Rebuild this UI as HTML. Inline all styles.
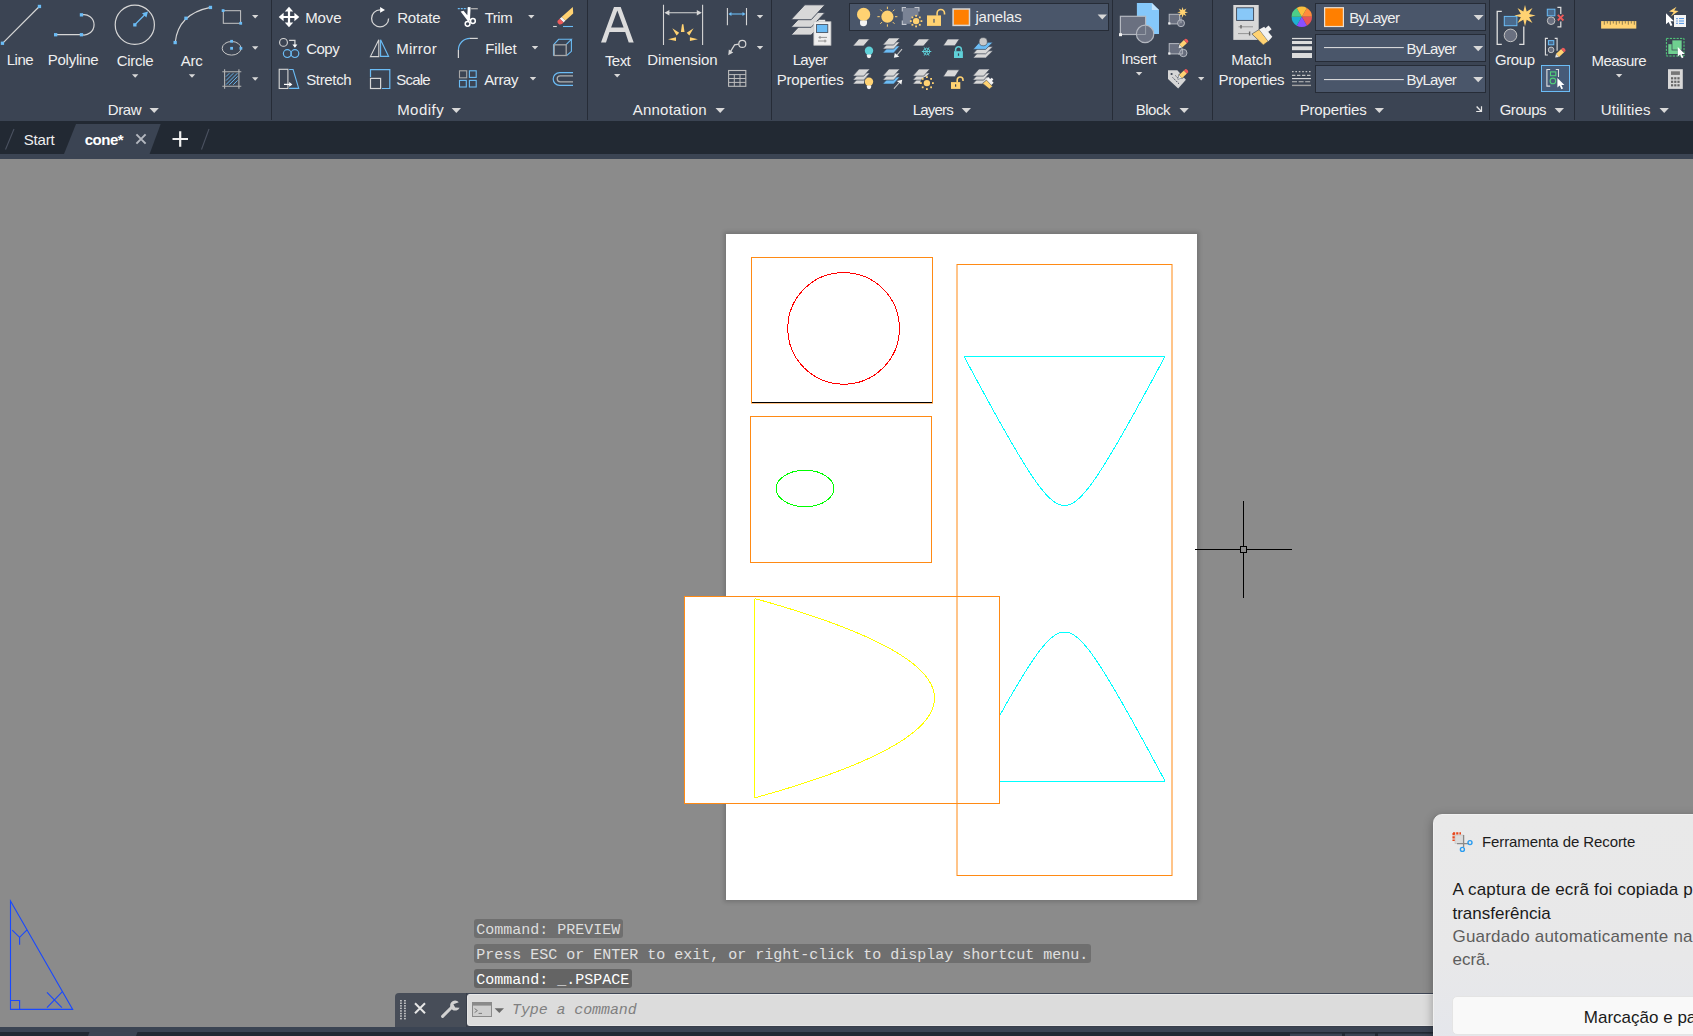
<!DOCTYPE html><html><head><meta charset="utf-8"><title>AutoCAD</title><style>
*{box-sizing:border-box;margin:0;padding:0}
html,body{width:1693px;height:1036px;overflow:hidden;background:#8b8b8b;font-family:"Liberation Sans",sans-serif}
#root{position:relative;width:1693px;height:1036px;overflow:hidden;background:#8b8b8b}
.abs{position:absolute}
#ribbon{left:0;top:0;width:1693px;height:121px;background:#3b4453}
.sep{position:absolute;top:0;width:1px;height:120px;background:#262c37}
#tabbar{left:0;top:121px;width:1693px;height:33px;background:#222933}
#understrip{left:0;top:154px;width:1693px;height:5px;background:#3b4453}
.lbl{position:absolute;white-space:nowrap}
svg{position:absolute;overflow:visible}
.combo{position:absolute;background:#4a566a;border:1px solid #262c37}
.hist{position:absolute;left:474px;height:19px;border-radius:3px;font-family:"Liberation Mono",monospace;font-size:15px;line-height:19px;padding-left:2.2px;white-space:nowrap;overflow:hidden}
</style></head><body><div id="root">
<div class="abs" style="left:726px;top:234px;width:471px;height:666px;background:#fff;box-shadow:0 0 4px 2px rgba(0,0,0,0.17)"></div>
<svg class="abs" style="left:0;top:0" width="1693" height="1036" viewBox="0 0 1693 1036" fill="none">
<g stroke="#00ffff" stroke-width="1" shape-rendering="crispEdges">
<polyline points="964.0,356.41 965.0,358.28 966.0,360.14 967.0,362.01 968.0,363.87 969.0,365.73 970.0,367.59 971.0,369.45 972.0,371.30 973.0,373.16 974.0,375.01 975.0,376.86 976.0,378.71 977.0,380.56 978.0,382.41 979.0,384.25 980.0,386.10 981.0,387.94 982.0,389.78 983.0,391.61 984.0,393.45 985.0,395.28 986.0,397.11 987.0,398.93 988.0,400.76 989.0,402.58 990.0,404.40 991.0,406.22 992.0,408.03 993.0,409.84 994.0,411.65 995.0,413.45 996.0,415.25 997.0,417.05 998.0,418.84 999.0,420.63 1000.0,422.42 1001.0,424.20 1002.0,425.97 1003.0,427.75 1004.0,429.51 1005.0,431.28 1006.0,433.03 1007.0,434.79 1008.0,436.53 1009.0,438.28 1010.0,440.01 1011.0,441.74 1012.0,443.46 1013.0,445.18 1014.0,446.89 1015.0,448.59 1016.0,450.28 1017.0,451.97 1018.0,453.64 1019.0,455.31 1020.0,456.97 1021.0,458.62 1022.0,460.25 1023.0,461.88 1024.0,463.50 1025.0,465.10 1026.0,466.69 1027.0,468.26 1028.0,469.82 1029.0,471.37 1030.0,472.90 1031.0,474.42 1032.0,475.91 1033.0,477.39 1034.0,478.85 1035.0,480.28 1036.0,481.70 1037.0,483.09 1038.0,484.46 1039.0,485.80 1040.0,487.11 1041.0,488.40 1042.0,489.65 1043.0,490.87 1044.0,492.06 1045.0,493.21 1046.0,494.32 1047.0,495.39 1048.0,496.42 1049.0,497.41 1050.0,498.35 1051.0,499.24 1052.0,500.08 1053.0,500.86 1054.0,501.59 1055.0,502.26 1056.0,502.87 1057.0,503.42 1058.0,503.91 1059.0,504.33 1060.0,504.68 1061.0,504.96 1062.0,505.18 1063.0,505.32 1064.0,505.39 1065.0,505.39 1066.0,505.32 1067.0,505.18 1068.0,504.96 1069.0,504.68 1070.0,504.33 1071.0,503.91 1072.0,503.42 1073.0,502.87 1074.0,502.26 1075.0,501.59 1076.0,500.86 1077.0,500.08 1078.0,499.24 1079.0,498.35 1080.0,497.41 1081.0,496.42 1082.0,495.39 1083.0,494.32 1084.0,493.21 1085.0,492.06 1086.0,490.87 1087.0,489.65 1088.0,488.40 1089.0,487.11 1090.0,485.80 1091.0,484.46 1092.0,483.09 1093.0,481.70 1094.0,480.28 1095.0,478.85 1096.0,477.39 1097.0,475.91 1098.0,474.42 1099.0,472.90 1100.0,471.37 1101.0,469.82 1102.0,468.26 1103.0,466.69 1104.0,465.10 1105.0,463.50 1106.0,461.88 1107.0,460.25 1108.0,458.62 1109.0,456.97 1110.0,455.31 1111.0,453.64 1112.0,451.97 1113.0,450.28 1114.0,448.59 1115.0,446.89 1116.0,445.18 1117.0,443.46 1118.0,441.74 1119.0,440.01 1120.0,438.28 1121.0,436.53 1122.0,434.79 1123.0,433.03 1124.0,431.28 1125.0,429.51 1126.0,427.75 1127.0,425.97 1128.0,424.20 1129.0,422.42 1130.0,420.63 1131.0,418.84 1132.0,417.05 1133.0,415.25 1134.0,413.45 1135.0,411.65 1136.0,409.84 1137.0,408.03 1138.0,406.22 1139.0,404.40 1140.0,402.58 1141.0,400.76 1142.0,398.93 1143.0,397.11 1144.0,395.28 1145.0,393.45 1146.0,391.61 1147.0,389.78 1148.0,387.94 1149.0,386.10 1150.0,384.25 1151.0,382.41 1152.0,380.56 1153.0,378.71 1154.0,376.86 1155.0,375.01 1156.0,373.16 1157.0,371.30 1158.0,369.45 1159.0,367.59 1160.0,365.73 1161.0,363.87 1162.0,362.01 1163.0,360.14 1164.0,358.28 1165.0,356.41"/>
<line x1="964" y1="356.5" x2="1165" y2="356.5"/>
<polyline points="964.0,780.99 965.0,779.12 966.0,777.26 967.0,775.39 968.0,773.53 969.0,771.67 970.0,769.81 971.0,767.95 972.0,766.10 973.0,764.24 974.0,762.39 975.0,760.54 976.0,758.69 977.0,756.84 978.0,754.99 979.0,753.15 980.0,751.30 981.0,749.46 982.0,747.62 983.0,745.79 984.0,743.95 985.0,742.12 986.0,740.29 987.0,738.47 988.0,736.64 989.0,734.82 990.0,733.00 991.0,731.18 992.0,729.37 993.0,727.56 994.0,725.75 995.0,723.95 996.0,722.15 997.0,720.35 998.0,718.56 999.0,716.77 1000.0,714.98 1001.0,713.20 1002.0,711.43 1003.0,709.65 1004.0,707.89 1005.0,706.12 1006.0,704.37 1007.0,702.61 1008.0,700.87 1009.0,699.12 1010.0,697.39 1011.0,695.66 1012.0,693.94 1013.0,692.22 1014.0,690.51 1015.0,688.81 1016.0,687.12 1017.0,685.43 1018.0,683.76 1019.0,682.09 1020.0,680.43 1021.0,678.78 1022.0,677.15 1023.0,675.52 1024.0,673.90 1025.0,672.30 1026.0,670.71 1027.0,669.14 1028.0,667.58 1029.0,666.03 1030.0,664.50 1031.0,662.98 1032.0,661.49 1033.0,660.01 1034.0,658.55 1035.0,657.12 1036.0,655.70 1037.0,654.31 1038.0,652.94 1039.0,651.60 1040.0,650.29 1041.0,649.00 1042.0,647.75 1043.0,646.53 1044.0,645.34 1045.0,644.19 1046.0,643.08 1047.0,642.01 1048.0,640.98 1049.0,639.99 1050.0,639.05 1051.0,638.16 1052.0,637.32 1053.0,636.54 1054.0,635.81 1055.0,635.14 1056.0,634.53 1057.0,633.98 1058.0,633.49 1059.0,633.07 1060.0,632.72 1061.0,632.44 1062.0,632.22 1063.0,632.08 1064.0,632.01 1065.0,632.01 1066.0,632.08 1067.0,632.22 1068.0,632.44 1069.0,632.72 1070.0,633.07 1071.0,633.49 1072.0,633.98 1073.0,634.53 1074.0,635.14 1075.0,635.81 1076.0,636.54 1077.0,637.32 1078.0,638.16 1079.0,639.05 1080.0,639.99 1081.0,640.98 1082.0,642.01 1083.0,643.08 1084.0,644.19 1085.0,645.34 1086.0,646.53 1087.0,647.75 1088.0,649.00 1089.0,650.29 1090.0,651.60 1091.0,652.94 1092.0,654.31 1093.0,655.70 1094.0,657.12 1095.0,658.55 1096.0,660.01 1097.0,661.49 1098.0,662.98 1099.0,664.50 1100.0,666.03 1101.0,667.58 1102.0,669.14 1103.0,670.71 1104.0,672.30 1105.0,673.90 1106.0,675.52 1107.0,677.15 1108.0,678.78 1109.0,680.43 1110.0,682.09 1111.0,683.76 1112.0,685.43 1113.0,687.12 1114.0,688.81 1115.0,690.51 1116.0,692.22 1117.0,693.94 1118.0,695.66 1119.0,697.39 1120.0,699.12 1121.0,700.87 1122.0,702.61 1123.0,704.37 1124.0,706.12 1125.0,707.89 1126.0,709.65 1127.0,711.43 1128.0,713.20 1129.0,714.98 1130.0,716.77 1131.0,718.56 1132.0,720.35 1133.0,722.15 1134.0,723.95 1135.0,725.75 1136.0,727.56 1137.0,729.37 1138.0,731.18 1139.0,733.00 1140.0,734.82 1141.0,736.64 1142.0,738.47 1143.0,740.29 1144.0,742.12 1145.0,743.95 1146.0,745.79 1147.0,747.62 1148.0,749.46 1149.0,751.30 1150.0,753.15 1151.0,754.99 1152.0,756.84 1153.0,758.69 1154.0,760.54 1155.0,762.39 1156.0,764.24 1157.0,766.10 1158.0,767.95 1159.0,769.81 1160.0,771.67 1161.0,773.53 1162.0,775.39 1163.0,777.26 1164.0,779.12 1165.0,780.99"/>
<line x1="964" y1="781.5" x2="1165" y2="781.5"/>
</g>
<rect x="684.5" y="596.5" width="315" height="207" fill="#fff" stroke="#ff8a14"/>
<g stroke="#ffff00" stroke-width="1" shape-rendering="crispEdges"><polyline points="754.5,598.5 754.58,598.5 758.18,599.5 761.73,600.5 765.25,601.5 768.73,602.5 772.18,603.5 775.59,604.5 778.96,605.5 782.30,606.5 785.60,607.5 788.87,608.5 792.09,609.5 795.29,610.5 798.44,611.5 801.56,612.5 804.65,613.5 807.70,614.5 810.71,615.5 813.68,616.5 816.62,617.5 819.53,618.5 822.39,619.5 825.23,620.5 828.02,621.5 830.78,622.5 833.50,623.5 836.19,624.5 838.84,625.5 841.45,626.5 844.03,627.5 846.57,628.5 849.07,629.5 851.54,630.5 853.98,631.5 856.37,632.5 858.73,633.5 861.06,634.5 863.34,635.5 865.60,636.5 867.81,637.5 869.99,638.5 872.13,639.5 874.24,640.5 876.31,641.5 878.34,642.5 880.34,643.5 882.31,644.5 884.23,645.5 886.12,646.5 887.97,647.5 889.79,648.5 891.57,649.5 893.32,650.5 895.03,651.5 896.70,652.5 898.33,653.5 899.93,654.5 901.50,655.5 903.03,656.5 904.52,657.5 905.97,658.5 907.39,659.5 908.77,660.5 910.12,661.5 911.43,662.5 912.71,663.5 913.94,664.5 915.15,665.5 916.31,666.5 917.44,667.5 918.53,668.5 919.59,669.5 920.61,670.5 921.60,671.5 922.55,672.5 923.46,673.5 924.33,674.5 925.17,675.5 925.98,676.5 926.74,677.5 927.48,678.5 928.17,679.5 928.83,680.5 929.45,681.5 930.04,682.5 930.59,683.5 931.10,684.5 931.58,685.5 932.02,686.5 932.43,687.5 932.80,688.5 933.13,689.5 933.43,690.5 933.69,691.5 933.91,692.5 934.10,693.5 934.25,694.5 934.37,695.5 934.45,696.5 934.49,697.5 934.50,698.5 934.47,699.5 934.40,700.5 934.30,701.5 934.17,702.5 933.99,703.5 933.78,704.5 933.54,705.5 933.25,706.5 932.93,707.5 932.58,708.5 932.19,709.5 931.76,710.5 931.30,711.5 930.80,712.5 930.26,713.5 929.69,714.5 929.08,715.5 928.44,716.5 927.76,717.5 927.04,718.5 926.29,719.5 925.50,720.5 924.67,721.5 923.81,722.5 922.91,723.5 921.98,724.5 921.01,725.5 920.00,726.5 918.96,727.5 917.88,728.5 916.77,729.5 915.62,730.5 914.43,731.5 913.21,732.5 911.95,733.5 910.65,734.5 909.32,735.5 907.95,736.5 906.54,737.5 905.10,738.5 903.63,739.5 902.11,740.5 900.56,741.5 898.98,742.5 897.36,743.5 895.70,744.5 894.01,745.5 892.27,746.5 890.51,747.5 888.71,748.5 886.87,749.5 884.99,750.5 883.08,751.5 881.13,752.5 879.15,753.5 877.13,754.5 875.07,755.5 872.98,756.5 870.85,757.5 868.69,758.5 866.49,759.5 864.25,760.5 861.98,761.5 859.67,762.5 857.32,763.5 854.94,764.5 852.52,765.5 850.07,766.5 847.57,767.5 845.05,768.5 842.49,769.5 839.89,770.5 837.25,771.5 834.58,772.5 831.87,773.5 829.13,774.5 826.35,775.5 823.53,776.5 820.68,777.5 817.79,778.5 814.86,779.5 811.90,780.5 808.91,781.5 805.87,782.5 802.80,783.5 799.70,784.5 796.55,785.5 793.38,786.5 790.16,787.5 786.91,788.5 783.62,789.5 780.30,790.5 776.94,791.5 773.55,792.5 770.11,793.5 766.65,794.5 763.14,795.5 759.60,796.5 756.03,797.5 754.5,797.8 754.5,598.5"/></g>
<rect x="751.5" y="257.5" width="181" height="145.5" stroke="#ff8a14"/>
<line x1="752" y1="402.5" x2="932" y2="402.5" stroke="#000" shape-rendering="crispEdges"/>
<rect x="750.5" y="416.5" width="181" height="146" stroke="#ff8a14"/>
<rect x="957" y="264.5" width="215" height="611" stroke="#ff8a14"/>
<circle cx="843.6" cy="328.4" r="55.8" stroke="#ff0000" shape-rendering="crispEdges"/>
<ellipse cx="805" cy="488.5" rx="28.8" ry="18.3" stroke="#00ff00" shape-rendering="crispEdges"/>
<g stroke="#000" shape-rendering="crispEdges"><line x1="1243.5" y1="501" x2="1243.5" y2="546"/><line x1="1243.5" y1="553" x2="1243.5" y2="598"/><line x1="1195" y1="549.5" x2="1240" y2="549.5"/><line x1="1247" y1="549.5" x2="1292" y2="549.5"/><rect x="1240.5" y="546.5" width="6" height="6"/></g>
<g stroke="#1848ff" stroke-width="1.1" fill="none"><path d="M10.5 901 L10.5 1009.4 L72.7 1009.4 Z"/><path d="M10.5 1000.5 H19.6 V1009.4"/><path d="M12.2 930.1 L19.6 937.3 L27 929.9 M19.6 937.3 V944.7"/><path d="M47 992.3 L61.9 1007.6 M62.4 991.6 L47 1007.6"/></g>
</svg>
<div id="ribbon" class="abs"></div>
<div class="sep" style="left:271px"></div>
<div class="sep" style="left:587px"></div>
<div class="sep" style="left:771px"></div>
<div class="sep" style="left:1112px"></div>
<div class="sep" style="left:1212px"></div>
<div class="sep" style="left:1489px"></div>
<div class="sep" style="left:1574px"></div>
<div id="tabbar" class="abs"></div><div id="understrip" class="abs"></div>
<div class="combo" style="left:849px;top:3px;width:260px;height:28px"></div>
<div class="combo" style="left:1315px;top:3px;width:171px;height:28px"></div>
<div class="combo" style="left:1315px;top:34px;width:171px;height:28px"></div>
<div class="combo" style="left:1315px;top:65px;width:171px;height:28px"></div>
<div class="abs" style="left:1541px;top:65px;width:29px;height:27px;background:#465b78;border:1.5px solid #6bbcf5"></div>
<svg class="abs" style="left:0;top:0" width="1693" height="160" viewBox="0 0 1693 160"><g fill="none" stroke="#d6d6d6" stroke-width="1.2">
<path d="M3 42.8L38.8 7"/>
<path d="M55.6 34.7H81.4M81.4 14.9A10.2 10.2 0 1 1 81.4 34.7"/>
<circle cx="134.8" cy="24.8" r="19.6"/>
<path d="M175.2 42.5Q178 14 210.4 7.4"/>
<rect x="223.3" y="10.7" width="17.3" height="12.6" stroke="#c6c6c6" stroke-width="1"/>
<ellipse cx="231.6" cy="48.3" rx="9.4" ry="6.8" stroke="#c6c6c6" stroke-width="1"/>
<path d="M222.3 71.7H241.3M222.3 86.2H241.3M224.6 69.2V88.8M238.9 69.2V88.8" stroke="#b4b4b4" stroke-width="1.1"/>
</g>
<g stroke="#6bbcf5" stroke-width="0.9"><path d="M226 76.6L229.4 73.2M226 80.6L233.4 73.2M226 84.6L237.4 73.2M229.2 84.8L237.6 76.4M233.2 84.8L237.6 80.4"/></g>
<rect x="37.8" y="4.8" width="3.3" height="3.3" fill="#6bbcf5"/>
<rect x="0.8" y="41.6" width="3.3" height="3.3" fill="#6bbcf5"/>
<rect x="79.8" y="13.2" width="3.3" height="3.3" fill="#6bbcf5"/>
<rect x="54.0" y="33.1" width="3.3" height="3.3" fill="#6bbcf5"/>
<rect x="79.8" y="33.1" width="3.3" height="3.3" fill="#6bbcf5"/>
<rect x="133.2" y="23.2" width="3.3" height="3.3" fill="#6bbcf5"/>
<rect x="173.5" y="40.9" width="3.3" height="3.3" fill="#6bbcf5"/>
<rect x="184.3" y="16.6" width="3.3" height="3.3" fill="#6bbcf5"/>
<rect x="208.8" y="5.8" width="3.3" height="3.3" fill="#6bbcf5"/>
<rect x="221.7" y="9.2" width="2.8" height="2.8" fill="#6bbcf5"/>
<rect x="239.3" y="21.9" width="2.8" height="2.8" fill="#6bbcf5"/>
<rect x="230.2" y="39.9" width="2.8" height="2.8" fill="#6bbcf5"/>
<rect x="230.2" y="46.9" width="2.8" height="2.8" fill="#6bbcf5"/>
<rect x="239.5" y="46.9" width="2.8" height="2.8" fill="#6bbcf5"/>
<path d="M135.5 24L145 14.5" stroke="#6bbcf5" stroke-width="1.2"/><path d="M148 11.6L142 13.2L146.4 17.6z" fill="#6bbcf5"/>
<path d="M252.0 14.9h6.4l-3.2 3.5z" fill="#d8d8d8"/>
<path d="M252.0 46.2h6.4l-3.2 3.5z" fill="#d8d8d8"/>
<path d="M252.0 77.2h6.4l-3.2 3.5z" fill="#d8d8d8"/>
<path d="M132.0 74.2h6.4l-3.2 3.5z" fill="#d8d8d8"/>
<path d="M188.8 74.2h6.4l-3.2 3.5z" fill="#d8d8d8"/>
<path d="M149.5 107.9h9.4l-4.7 5.2z" fill="#d8d8d8"/>
<path d="M287.9 10h2.2v5.9h5.9v2.2h-5.9v5.9h-2.2v-5.9h-5.9v-2.2h5.9z" fill="#ffffff"/>
<path d="M289 6.7l4.2 4.9h-8.4zM289 27.3l4.2-4.9h-8.4zM278.7 17l4.9-4.2v8.4zM299.3 17l-4.9-4.2v8.4z" fill="#ffffff"/>
<path d="M380.1 9.9A8.5 8.5 0 1 0 388.6 18.4" fill="none" stroke="#d6d6d6" stroke-width="1.3"/><path d="M380.1 7L385 9.9L380.1 12.8z" fill="#ffffff"/>
<circle cx="283.5" cy="42.4" r="3.9" fill="none" stroke="#d6d6d6" stroke-width="1.1"/><path d="M289.1 40.3H294.9V45" fill="none" stroke="#d6d6d6" stroke-width="1.3"/><path d="M292.4 44.6h5l-2.5 3.2z" fill="#ffffff"/>
<circle cx="287.3" cy="53.6" r="3.9" fill="none" stroke="#6bbcf5" stroke-width="1.2"/><circle cx="294.9" cy="53.6" r="3.9" fill="none" stroke="#6bbcf5" stroke-width="1.2"/>
<path d="M378.8 39.7V56.6H370.4z" fill="none" stroke="#d6d6d6" stroke-width="1.1"/><path d="M380.6 39.7V56.4H388.6z" fill="none" stroke="#6bbcf5" stroke-width="1.1"/>
<rect x="279.2" y="69.3" width="8.7" height="19.2" fill="none" stroke="#d6d6d6" stroke-width="1.1"/><path d="M289.1 69.5H293.1L298.7 88.4H289.1" fill="none" stroke="#6bbcf5" stroke-width="1.1"/><path d="M284 84.4H290" stroke="#ffffff" stroke-width="1.2"/><path d="M289.2 82l3.2 2.4l-3.2 2.4z" fill="#ffffff"/>
<path d="M370.5 77V69.6H389.8V88.5H382" fill="none" stroke="#6bbcf5" stroke-width="1.2"/><rect x="370.5" y="78.4" width="10.1" height="10.1" fill="none" stroke="#d6d6d6" stroke-width="1.2"/>
<path d="M457.8 8.7H467.3" stroke="#6bbcf5" stroke-width="1.3" stroke-dasharray="2 1"/><path d="M471.1 8.7H477.8" stroke="#b0b0b0" stroke-width="1.3"/>
<path d="M460.6 11.4L463.6 10.8L471 19.8L468.2 21.6zM467.8 7L470.6 7.2L470 19.8L467 20.6z" fill="#ffffff"/><circle cx="467.6" cy="23.8" r="2.4" fill="none" stroke="#ffffff" stroke-width="1.5"/><circle cx="472.9" cy="21" r="2.4" fill="none" stroke="#ffffff" stroke-width="1.5"/>
<path d="M458.4 58V50" stroke="#d6d6d6" stroke-width="1.2"/><path d="M458.4 50A11.6 11.6 0 0 1 470 38.4" fill="none" stroke="#6bbcf5" stroke-width="1.2"/><path d="M470 38.4H477.8" stroke="#d6d6d6" stroke-width="1.2"/>
<rect x="459.5" y="70.8" width="7.2" height="7" fill="none" stroke="#a8a8a8" stroke-width="1.1"/>
<rect x="469.4" y="70.8" width="6.8" height="6.6" fill="none" stroke="#6bbcf5" stroke-width="1.1"/>
<rect x="459.5" y="80.4" width="6.8" height="6.6" fill="none" stroke="#6bbcf5" stroke-width="1.1"/>
<rect x="469.4" y="80.4" width="6.8" height="6.6" fill="none" stroke="#6bbcf5" stroke-width="1.1"/>
<path d="M572.8 6.9L573.2 13.5L565.4 20.6L561.6 17z" fill="#ffd272"/><path d="M561.6 17L565.4 20.6L563.6 22.4L559.7 18.8z" fill="#f4f4f4"/><path d="M559.7 18.8L563.6 22.4Q561.8 24.8 559.4 24.4Q557 23.6 557.4 21z" fill="#f05a5a"/>
<path d="M553.1 26.5H556.8" stroke="#d6d6d6" stroke-width="1.1"/><path d="M563 26.5H573" stroke="#6bbcf5" stroke-width="1.1"/>
<path d="M553.7 44.6L558.6 39.3H571.4L566.1 44.6M571.4 39.3V51.3L566.6 55.7M553.5 44.6V55.7" fill="none" stroke="#6bbcf5" stroke-width="1.1"/><rect x="554.2" y="44.8" width="12" height="10.7" fill="none" stroke="#a8a8a8" stroke-width="1.3"/>
<path d="M573 72.6H559.6A6.4 6.4 0 0 0 559.6 85.4H573" fill="none" stroke="#6bbcf5" stroke-width="1.2"/><path d="M573 75.8H560.2A3 3 0 0 0 560.2 81.8H573" fill="none" stroke="#b0b0b0" stroke-width="1.2"/>
<path d="M528.1 15.1h6.4l-3.2 3.5z" fill="#d8d8d8"/>
<path d="M531.8 46.0h6.4l-3.2 3.5z" fill="#d8d8d8"/>
<path d="M529.8 77.0h6.4l-3.2 3.5z" fill="#d8d8d8"/>
<path d="M451.6 107.9h9.4l-4.7 5.2z" fill="#d8d8d8"/>
<path fill-rule="evenodd" fill="#dcdcdc" d="M601 42.5L614 6.9H620.7L633.7 42.5H628.7L625.2 31.9H609.5L606 42.5zM611.1 27.6H623.6L617.35 10.4z"/>
<path d="M663.5 4.8V44.9M702.6 4.8V44.9M667 12.8H699" fill="none" stroke="#d6d6d6" stroke-width="1.1"/>
<path d="M664.4 12.8l5-2.7v5.4zM701.8 12.8l-5-2.7v5.4z" fill="#d6d6d6"/>
<path d="M682 24.3h1.4l1.1 7.6h-3.6zM672.3 28.2l6.9 4.6l-2.6 2.8zM693.6 28.2l-6.9 4.6l2.6 2.8zM668 39.3l8-2v3.8zM697.9 39.3l-8-2v3.8z" fill="#ffd272"/>
<path d="M727.4 8V25.2M746.5 8V25.2" stroke="#d6d6d6" stroke-width="1.1"/><path d="M730 14H744" stroke="#6bbcf5" stroke-width="1.1"/><path d="M728.4 14l3-1.9v3.8zM745.5 14l-3-1.9v3.8z" fill="#6bbcf5"/>
<circle cx="742.3" cy="43.9" r="3.5" fill="none" stroke="#d6d6d6" stroke-width="1.2"/><path d="M738.8 44.2L734.6 44.9L730 52.4" fill="none" stroke="#d6d6d6" stroke-width="1.2"/><path d="M728.2 55.2L728.9 49.6L733.2 52.6z" fill="#d6d6d6"/>
<rect x="728.6" y="70.5" width="17.2" height="15.8" fill="none" stroke="#bdbdbd" stroke-width="1.1"/><path d="M728.6 74.6H745.8M728.6 78.5H745.8M728.6 82.4H745.8M734.3 74.6V86.3M740 74.6V86.3" stroke="#bdbdbd" stroke-width="1"/>
<path d="M756.8 15.1h6.4l-3.2 3.5z" fill="#d8d8d8"/>
<path d="M756.8 46.0h6.4l-3.2 3.5z" fill="#d8d8d8"/>
<path d="M614.0 74.0h6.4l-3.2 3.5z" fill="#d8d8d8"/>
<path d="M715.5 107.9h9.4l-4.7 5.2z" fill="#d8d8d8"/>
<path d="M804.8 20.2H825L811.2 35.1H791z" fill="#d8d8d8" stroke="#3b4453" stroke-width="0.9"/>
<path d="M804.8 12.4H825L811.2 27.3H791z" fill="#d8d8d8" stroke="#3b4453" stroke-width="0.9"/>
<path d="M804.8 4.8H825L811.2 19.7H791z" fill="#d8d8d8" stroke="#3b4453" stroke-width="0.9"/>
<rect x="818.6" y="19.8" width="6.6" height="3" fill="#e8e8e8"/><rect x="813.9" y="21.8" width="17" height="23.4" fill="#efefef" stroke="#c8c8c8" stroke-width="0.8"/><rect x="816.6" y="24.6" width="11.2" height="7.8" fill="#6bbcf5" stroke="#3b4453" stroke-width="0.8"/>
<path d="M818.5 37.4H827M818 41H826.5" stroke="#8a8a8a" stroke-width="0.9"/><path d="M820 36v2.8M825 39.6v2.8" stroke="#8a8a8a" stroke-width="1"/>
<circle cx="863.6" cy="14.4" r="6.6" fill="#ffd272"/>
<path d="M860.1 20.6h6.9v2.3q0 3.0 -3.5 3.3q-3.5 0 -3.5 -3.3z" fill="#f4f4f4"/>
<circle cx="887.4" cy="16.7" r="6.1" fill="#ffd272"/>
<path d="M895.0 16.7L897.4 16.7" stroke="#ffd272" stroke-width="1.0"/>
<path d="M892.8 22.1L894.5 23.8" stroke="#ffd272" stroke-width="1.0"/>
<path d="M887.4 24.3L887.4 26.7" stroke="#ffd272" stroke-width="1.0"/>
<path d="M882.0 22.1L880.3 23.8" stroke="#ffd272" stroke-width="1.0"/>
<path d="M879.8 16.7L877.4 16.7" stroke="#ffd272" stroke-width="1.0"/>
<path d="M882.0 11.3L880.3 9.6" stroke="#ffd272" stroke-width="1.0"/>
<path d="M887.4 9.1L887.4 6.7" stroke="#ffd272" stroke-width="1.0"/>
<path d="M892.8 11.3L894.5 9.6" stroke="#ffd272" stroke-width="1.0"/>
<rect x="902.8" y="8" width="15.6" height="15.8" fill="#7a8395"/><path d="M902.3 11.5V7.5H906M914.5 7.5H918.9V11.5M902.3 20.5V24.4H906.5" fill="none" stroke="#c4c8d0" stroke-width="1.1"/>
<circle cx="916.1" cy="21.1" r="5.6" fill="#4a566a"/>
<circle cx="916.1" cy="21.1" r="3.2" fill="#ffd272"/>
<rect x="920.5" y="20.2" width="1.8" height="1.8" fill="#ffd272"/>
<rect x="918.9" y="23.9" width="1.8" height="1.8" fill="#ffd272"/>
<rect x="915.2" y="25.5" width="1.8" height="1.8" fill="#ffd272"/>
<rect x="911.5" y="23.9" width="1.8" height="1.8" fill="#ffd272"/>
<rect x="909.9" y="20.2" width="1.8" height="1.8" fill="#ffd272"/>
<rect x="911.5" y="16.5" width="1.8" height="1.8" fill="#ffd272"/>
<rect x="915.2" y="14.9" width="1.8" height="1.8" fill="#ffd272"/>
<rect x="918.9" y="16.5" width="1.8" height="1.8" fill="#ffd272"/>
<rect x="927" y="15.4" width="14" height="10.5" fill="#ffd272"/>
<rect x="933.4" y="18.9" width="1.2" height="3.8" fill="#4a566a"/>
<path d="M937.1 15.7V13.2A3.7 3.7 0 0 1 944.5 13.2V14.4" fill="none" stroke="#ffd272" stroke-width="1.6"/>
<rect x="953.1" y="9" width="16.4" height="16.4" fill="#ff7f00" stroke="#d8d8d8" stroke-width="1.5"/>
<path d="M1097.6 14.4h9.4l-4.7 5.2z" fill="#d8d8d8"/>
<path d="M858.8 38.9h10.8l-6.0 7.1h-10.8z" fill="#d8d8d8" stroke="#3b4453" stroke-width="0.7"/>
<circle cx="869" cy="50.8" r="4.2" fill="#5fd0d8"/>
<path d="M866.8 54.6h4.4v1.5q0 1.9 -2.2 2.1q-2.2 0 -2.2 -2.1z" fill="#f4f4f4"/>
<path d="M888.9 45.9h11.0l-6.2 7.1h-11.0z" fill="#6bbcf5" stroke="#3b4453" stroke-width="0.7"/>
<path d="M888.9 41.9h11.0l-6.2 7.1h-11.0z" fill="#d8d8d8" stroke="#3b4453" stroke-width="0.7"/>
<path d="M888.9 37.9h11.0l-6.2 7.1h-11.0z" fill="#d8d8d8" stroke="#3b4453" stroke-width="0.7"/>
<path d="M902 49.1L897 55" stroke="#c8c8c8" stroke-width="1.1"/><path d="M893.9 57.8L894.8 53.1L899.3 56.7z" fill="#f4f4f4"/>
<path d="M918.7 38.9h10.8l-6.0 7.1h-10.8z" fill="#d8d8d8" stroke="#3b4453" stroke-width="0.7"/>
<path d="M921.9 51.5L931.3 51.5" stroke="#5fd0d8" stroke-width="1"/>
<path d="M924.2 47.4L929.0 55.6" stroke="#5fd0d8" stroke-width="1"/>
<path d="M929.0 47.4L924.2 55.6" stroke="#5fd0d8" stroke-width="1"/>
<path d="M929.5 53.2L926.6 54.9L923.7 53.2L923.7 49.8L926.6 48.1L929.5 49.8z" fill="none" stroke="#5fd0d8" stroke-width="0.9"/>
<path d="M947.6 39.0h11.8l-4.5 6.8h-11.8z" fill="#d8d8d8" stroke="#3b4453" stroke-width="0.7"/>
<rect x="954" y="51.2" width="8.9" height="6.8" fill="#5fd0d8"/>
<rect x="957.9" y="53.4" width="1.2" height="2.4" fill="#3b4453"/>
<path d="M955.6 51.5V49.7A2.9 2.9 0 0 1 961.4 49.7V51.5" fill="none" stroke="#5fd0d8" stroke-width="1.5"/>
<path d="M979.4 50.8H993L985.7 58.0H973z" fill="#d8d8d8" stroke="#3b4453" stroke-width="0.7"/>
<path d="M979.4 46.6H993L985.7 53.8H973z" fill="#d8d8d8" stroke="#3b4453" stroke-width="0.7"/>
<path d="M979.4 42.2H993L985.7 49.4H973z" fill="#6bbcf5" stroke="#3b4453" stroke-width="0.7"/>
<circle cx="983.2" cy="41.7" r="4.1" fill="#c8c8c8" stroke="#3b4453" stroke-width="0.6"/>
<path d="M859.0 77.0h11.0l-6.2 7.1h-11.0z" fill="#d8d8d8" stroke="#3b4453" stroke-width="0.7"/>
<path d="M859.0 73.0h11.0l-6.2 7.1h-11.0z" fill="#d8d8d8" stroke="#3b4453" stroke-width="0.7"/>
<path d="M859.0 69.0h11.0l-6.2 7.1h-11.0z" fill="#d8d8d8" stroke="#3b4453" stroke-width="0.7"/>
<circle cx="869" cy="82" r="5" fill="#3b4453"/>
<circle cx="869" cy="81.8" r="4.2" fill="#ffd272"/>
<path d="M866.8 85.6h4.4v1.5q0 1.9 -2.2 2.1q-2.2 0 -2.2 -2.1z" fill="#f4f4f4"/>
<path d="M888.9 77.0h11.0l-6.2 7.1h-11.0z" fill="#6bbcf5" stroke="#3b4453" stroke-width="0.7"/>
<path d="M888.9 73.0h11.0l-6.2 7.1h-11.0z" fill="#d8d8d8" stroke="#3b4453" stroke-width="0.7"/>
<path d="M888.9 69.0h11.0l-6.2 7.1h-11.0z" fill="#d8d8d8" stroke="#3b4453" stroke-width="0.7"/>
<path d="M894 88.6L899 83" stroke="#c8c8c8" stroke-width="1.1"/><path d="M902.2 79.8L901.4 84.6L896.8 81z" fill="#f4f4f4"/>
<path d="M918.9 77.0h11.0l-6.2 7.1h-11.0z" fill="#d8d8d8" stroke="#3b4453" stroke-width="0.7"/>
<path d="M918.9 73.0h11.0l-6.2 7.1h-11.0z" fill="#d8d8d8" stroke="#3b4453" stroke-width="0.7"/>
<path d="M918.9 69.0h11.0l-6.2 7.1h-11.0z" fill="#d8d8d8" stroke="#3b4453" stroke-width="0.7"/>
<circle cx="926.9" cy="83.1" r="6.6" fill="#3b4453"/>
<circle cx="926.9" cy="83.1" r="3.2" fill="#ffd272"/>
<rect x="932.0" y="82.2" width="1.8" height="1.8" fill="#ffd272"/>
<rect x="930.2" y="86.4" width="1.8" height="1.8" fill="#ffd272"/>
<rect x="926.0" y="88.2" width="1.8" height="1.8" fill="#ffd272"/>
<rect x="921.8" y="86.4" width="1.8" height="1.8" fill="#ffd272"/>
<rect x="920.0" y="82.2" width="1.8" height="1.8" fill="#ffd272"/>
<rect x="921.8" y="78.0" width="1.8" height="1.8" fill="#ffd272"/>
<rect x="926.0" y="76.2" width="1.8" height="1.8" fill="#ffd272"/>
<rect x="930.2" y="78.0" width="1.8" height="1.8" fill="#ffd272"/>
<path d="M947.6 69.8h11.8l-4.5 7.0h-11.8z" fill="#d8d8d8" stroke="#3b4453" stroke-width="0.7"/>
<rect x="951" y="82.1" width="9.3" height="6.8" fill="#ffd272"/>
<rect x="955.0" y="84.3" width="1.2" height="2.4" fill="#3b4453"/>
<path d="M957.2 82.4V79.9A2.9 2.9 0 0 1 963.0 79.9V81.1" fill="none" stroke="#ffd272" stroke-width="1.6"/>
<path d="M978.9 77.0h11.0l-6.2 7.1h-11.0z" fill="#d8d8d8" stroke="#3b4453" stroke-width="0.7"/>
<path d="M978.9 73.0h11.0l-6.2 7.1h-11.0z" fill="#d8d8d8" stroke="#3b4453" stroke-width="0.7"/>
<path d="M978.9 69.0h11.0l-6.2 7.1h-11.0z" fill="#d8d8d8" stroke="#3b4453" stroke-width="0.7"/>
<path d="M982.6 83.4L986.6 80L992.6 86.4L989.4 89z" fill="#ffd272" stroke="#3b4453" stroke-width="0.6"/><path d="M986.2 79.6L988.6 77.4L990.2 79L991.8 77.8L993.4 79.6L992 81L993.6 82.8L991.4 85z" fill="#f4f4f4"/>
<path d="M961.6 107.9h9.4l-4.7 5.2z" fill="#d8d8d8"/>
<path d="M1136.9 2.9H1151.9L1159 10V34H1136.9z" fill="#85c8fa"/><path d="M1151.9 2.9L1159 10H1151.9z" fill="#c2e3fc"/>
<rect x="1120.4" y="16.3" width="25.2" height="18.2" fill="#6a7080" stroke="#b4b8c0" stroke-width="1.2"/>
<circle cx="1145.1" cy="33.9" r="8.7" fill="#6d7383" stroke="#b4b8c0" stroke-width="1.2"/><path d="M1145.6 25.5V34.5H1137" fill="none" stroke="#9aa0aa" stroke-width="1"/>
<rect x="1119" y="33.2" width="3" height="3" fill="#f0f0f0"/>
<path d="M1135.9 72.0h6.4l-3.2 3.5z" fill="#d8d8d8"/>
<rect x="1169.2" y="14.3" width="10.4" height="9.6" fill="#6a7080" stroke="#b4b8c0" stroke-width="1"/><circle cx="1181" cy="23.2" r="3.5" fill="rgba(112,118,134,0.8)" stroke="#b4b8c0" stroke-width="1"/><path d="M1181 16.5V23.2" stroke="#b4b8c0" stroke-width="0.9"/><rect x="1168.2" y="22.3" width="2.2" height="2.2" fill="#f0f0f0"/>
<path d="M1182.6 6.9L1183.5 10.1L1186.4 8.5L1184.8 11.4L1188.0 12.3L1184.8 13.2L1186.4 16.1L1183.5 14.5L1182.6 17.7L1181.7 14.5L1178.8 16.1L1180.4 13.2L1177.2 12.3L1180.4 11.4L1178.8 8.5L1181.7 10.1z" fill="#ffd272"/>
<rect x="1169.2" y="43.6" width="12.6" height="10.3" fill="#6a7080" stroke="#b4b8c0" stroke-width="1"/><circle cx="1183.3" cy="53" r="3.7" fill="rgba(112,118,134,0.8)" stroke="#b4b8c0" stroke-width="1"/><path d="M1182.6 48.4V54H1178" fill="none" stroke="#b4b8c0" stroke-width="0.9"/><rect x="1168.2" y="52.4" width="2.2" height="2.2" fill="#f0f0f0"/>
<path d="M1177.9 48.8L1182.9 48.0L1189.3 41.9Q1188.8 38.5 1185.4 37.8L1179.0 43.9z" fill="#3b4453"/>
<path d="M1178.3 48.4L1182.2 47.6L1179.3 44.5z" fill="#e4e4e4"/>
<path d="M1182.2 47.6L1186.9 43.2L1183.9 40.1L1179.3 44.5z" fill="#ffd272"/>
<path d="M1186.9 43.2L1188.4 41.8Q1188.2 39.1 1185.4 38.7L1183.9 40.1z" fill="#f05a5a"/>
<path d="M1168 70.3H1177.3L1185.9 79.8L1178.2 88.6L1168 78.9z" fill="#d6d6d6"/><circle cx="1171.6" cy="74" r="1.1" fill="#3b4453"/><path d="M1172.6 77.4L1179.4 84.2M1175.4 75.6L1178.6 78.8" stroke="#4a5160" stroke-width="1" stroke-dasharray="1.6 0.9"/>
<path d="M1177.6 79.4L1182.6 78.6L1189.3 72.4Q1188.8 68.9 1185.4 68.2L1178.7 74.5z" fill="#3b4453"/>
<path d="M1178.0 79.0L1182.0 78.2L1179.0 75.1z" fill="#e4e4e4"/>
<path d="M1182.0 78.2L1186.9 73.6L1183.9 70.5L1179.0 75.1z" fill="#ffd272"/>
<path d="M1186.9 73.6L1188.3 72.3Q1188.2 69.5 1185.4 69.1L1183.9 70.5z" fill="#f05a5a"/>
<path d="M1198.0 77.0h6.4l-3.2 3.5z" fill="#d8d8d8"/>
<path d="M1179.5 107.9h9.4l-4.7 5.2z" fill="#d8d8d8"/>
<rect x="1233.3" y="5" width="25.4" height="34.9" fill="#d8d8d8"/><rect x="1236.6" y="7.8" width="17" height="12.6" fill="#88c8f8" stroke="#3b4453" stroke-width="0.9"/>
<path d="M1238.5 26.8H1253M1238 33.6H1250" stroke="#8c8c8c" stroke-width="0.9"/><path d="M1241 25v3.6M1249.6 31.6v4" stroke="#666" stroke-width="1.4"/>
<path d="M1251.9 34L1259.2 29.5L1268.3 41.3L1263.3 44.9z" fill="#ffd272" stroke="#3b4453" stroke-width="0.6"/><path d="M1259.2 29.5L1264.2 26.8L1272.3 36.8L1268.3 41.3z" fill="#f2f2f2"/><path d="M1265 28.4L1268.6 25.6L1271.6 29.2L1268 32z" fill="#f2f2f2"/>
<path d="M1301.8 16.8L1306.90 7.97A10.2 10.2 0 0 1 1312.00 16.80z" fill="#ff8c3c"/>
<path d="M1301.8 16.8L1312.00 16.80A10.2 10.2 0 0 1 1306.90 25.63z" fill="#e85555"/>
<path d="M1301.8 16.8L1306.90 25.63A10.2 10.2 0 0 1 1296.70 25.63z" fill="#8a4fff"/>
<path d="M1301.8 16.8L1296.70 25.63A10.2 10.2 0 0 1 1291.60 16.80z" fill="#1fb0d0"/>
<path d="M1301.8 16.8L1291.60 16.80A10.2 10.2 0 0 1 1296.70 7.97z" fill="#4ccf88"/>
<path d="M1301.8 16.8L1296.70 7.97A10.2 10.2 0 0 1 1306.90 7.97z" fill="#fbbf3c"/>
<rect x="1292" y="37.9" width="20" height="1.3" fill="#dcdcdc"/>
<rect x="1292" y="41" width="20" height="3" fill="#dcdcdc"/>
<rect x="1292" y="46.3" width="20" height="3.9" fill="#dcdcdc"/>
<rect x="1292" y="53" width="20" height="5" fill="#dcdcdc"/>
<g stroke="#c0c0c0" stroke-width="1.1"><path d="M1292 71.6H1311" stroke-dasharray="1.6 1.8"/><path d="M1292 75.4H1311" stroke-dasharray="3.4 1.6"/><path d="M1292 78.6H1311" stroke="#e0e0e0"/><path d="M1292 81.8H1311" stroke-dasharray="5 1.6"/><path d="M1292 85.4H1311" stroke="#a0a0a0" stroke-width="1.4"/></g>
<rect x="1324.6" y="7.7" width="18.8" height="18.8" fill="#ff7f00" stroke="#eadfd2" stroke-width="1.2"/>
<path d="M1324 47.6H1403.8M1324 79.6H1403.8" stroke="#e4e4e4" stroke-width="1"/>
<path d="M1473.6 15.0h10.0l-5.0 5.2z" fill="#d8d8d8"/>
<path d="M1473.2 46.0h10.0l-5.0 5.2z" fill="#d8d8d8"/>
<path d="M1473.2 77.0h10.0l-5.0 5.2z" fill="#d8d8d8"/>
<path d="M1374.6 107.9h9.4l-4.7 5.2z" fill="#d8d8d8"/>
<path d="M1476.6 106.6L1481.2 111.2" stroke="#e6e6e6" stroke-width="1.4"/><path d="M1476.2 111.5H1481.5V106.2" fill="none" stroke="#e6e6e6" stroke-width="1.2"/>
<path d="M1501.8 11.4H1497.2V44.4H1501.8M1519.2 44.4H1523.8V26.4" fill="none" stroke="#e0e0e0" stroke-width="1.3"/>
<rect x="1504.3" y="16.4" width="12.6" height="9.3" fill="#4a6a8c" stroke="#6bbcf5" stroke-width="1"/><circle cx="1510.5" cy="35.4" r="6.3" fill="#6a7080" stroke="#c4c4c4" stroke-width="1"/>
<path d="M1525.0 5.0L1526.7 11.5L1532.5 8.1L1529.1 13.9L1535.6 15.6L1529.1 17.3L1532.5 23.1L1526.7 19.7L1525.0 26.2L1523.3 19.7L1517.5 23.1L1520.9 17.3L1514.4 15.6L1520.9 13.9L1517.5 8.1L1523.3 11.5z" fill="#ffd272"/>
<rect x="1547.3" y="9.2" width="7.6" height="6.6" fill="#4a6a8c" stroke="#6bbcf5" stroke-width="1"/><circle cx="1551.1" cy="20.7" r="3.8" fill="#6a7080" stroke="#c4c4c4" stroke-width="1"/><path d="M1557.4 7.4H1560.8V26.8H1557.4" fill="none" stroke="#e0e0e0" stroke-width="1.2"/><circle cx="1560.6" cy="17.7" r="3.8" fill="#3b4453"/><path d="M1557.8 14.9L1563.4 20.5M1563.4 14.9L1557.8 20.5" stroke="#f05a5a" stroke-width="1.8"/>
<path d="M1547.9 38.4H1545.4V55H1547.9M1554.7 38.4H1557.1V50.8" fill="none" stroke="#e0e0e0" stroke-width="1.1"/><rect x="1548.4" y="40.6" width="5.4" height="4.2" fill="#4a6a8c" stroke="#6bbcf5" stroke-width="1"/><circle cx="1551.1" cy="49.9" r="2.8" fill="#6a7080" stroke="#c4c4c4" stroke-width="1"/>
<path d="M1554.7 58.0L1559.7 57.3L1566.5 51.0Q1566.1 47.5 1562.7 46.8L1555.8 53.1z" fill="#3b4453"/>
<path d="M1555.1 57.6L1559.1 56.9L1556.1 53.7z" fill="#e4e4e4"/>
<path d="M1559.1 56.9L1564.1 52.2L1561.2 49.0L1556.1 53.7z" fill="#ffd272"/>
<path d="M1564.1 52.2L1565.6 50.9Q1565.5 48.1 1562.7 47.7L1561.2 49.0z" fill="#f05a5a"/>
<path d="M1550.2 69.5H1546.9V86.1H1550.2M1555.8 69.5H1558.5V77" fill="none" stroke="#e0e0e0" stroke-width="1.1"/><rect x="1550.5" y="71.9" width="5.3" height="3.8" fill="none" stroke="#52d07a" stroke-width="1.1"/><circle cx="1552.9" cy="80.9" r="2.8" fill="none" stroke="#52d07a" stroke-width="1.1"/>
<path d="M1557.4 78.0L1557.4 87.6L1559.7 85.6L1561.4 89.2L1563.0 88.4L1561.4 85.0L1564.4 85.0z" fill="#ffffff"/>
<path d="M1554.6 107.9h9.4l-4.7 5.2z" fill="#d8d8d8"/>
<rect x="1601.1" y="21.1" width="35.2" height="7.5" fill="#ffd272"/>
<rect x="1603.8" y="21.1" width="1" height="3.6" fill="#8a7a50"/>
<rect x="1606.8" y="21.1" width="1" height="2.4" fill="#8a7a50"/>
<rect x="1609.8" y="21.1" width="1" height="3.6" fill="#8a7a50"/>
<rect x="1612.8" y="21.1" width="1" height="2.4" fill="#8a7a50"/>
<rect x="1615.8" y="21.1" width="1" height="3.6" fill="#8a7a50"/>
<rect x="1618.8" y="21.1" width="1" height="2.4" fill="#8a7a50"/>
<rect x="1621.8" y="21.1" width="1" height="3.6" fill="#8a7a50"/>
<rect x="1624.8" y="21.1" width="1" height="2.4" fill="#8a7a50"/>
<rect x="1627.8" y="21.1" width="1" height="3.6" fill="#8a7a50"/>
<rect x="1630.8" y="21.1" width="1" height="2.4" fill="#8a7a50"/>
<rect x="1633.8" y="21.1" width="1" height="3.6" fill="#8a7a50"/>
<path d="M1615.9 74.0h6.4l-3.2 3.5z" fill="#d8d8d8"/>
<rect x="1674" y="15" width="12" height="12" fill="#f4f4f4"/><path d="M1679 18.6H1684M1679 21H1684M1679 23.4H1684" stroke="#4a90e0" stroke-width="1"/><path d="M1676.4 18.6h1.2M1676.4 21h1.2M1676.4 23.4h1.2" stroke="#2a70d0" stroke-width="1.2"/>
<path d="M1676.6 6.8L1669 11.4L1673.6 12.2L1670.8 16.6L1678.6 11L1674.2 10.4z" fill="#ffd272"/>
<path d="M1666.0 13.2L1666.0 24.2L1668.6 21.9L1670.6 26.1L1672.4 25.2L1670.6 21.2L1674.0 21.2z" fill="#ffffff"/>
<rect x="1666.4" y="38.4" width="17.6" height="17.6" fill="none" stroke="#52d07a" stroke-width="1" stroke-dasharray="2.2 1.2"/><rect x="1668.3" y="44.2" width="9.5" height="9.8" fill="#6fd090"/><rect x="1672" y="40" width="10" height="10" fill="#6fd090" stroke="#3b4453" stroke-width="0.7"/>
<path d="M1677.8 47.0L1677.8 56.6L1680.1 54.6L1681.8 58.2L1683.4 57.4L1681.8 54.0L1684.8 54.0z" fill="#ffffff"/>
<rect x="1668" y="69.2" width="14.8" height="19.7" fill="#d8d8d8"/><rect x="1671" y="71.3" width="8.9" height="3.6" fill="#777"/>
<rect x="1671.0" y="77.2" width="2.2" height="2.2" fill="#666"/>
<rect x="1671.0" y="80.7" width="2.2" height="2.2" fill="#666"/>
<rect x="1671.0" y="84.2" width="2.2" height="2.2" fill="#666"/>
<rect x="1674.2" y="77.2" width="2.2" height="2.2" fill="#666"/>
<rect x="1674.2" y="80.7" width="2.2" height="2.2" fill="#666"/>
<rect x="1674.2" y="84.2" width="2.2" height="2.2" fill="#666"/>
<rect x="1677.4" y="77.2" width="2.2" height="2.2" fill="#666"/>
<rect x="1677.4" y="80.7" width="2.2" height="2.2" fill="#666"/>
<rect x="1677.4" y="84.2" width="2.2" height="2.2" fill="#666"/>
<path d="M1659.5 107.9h9.4l-4.7 5.2z" fill="#d8d8d8"/>
<path d="M76 124H160.7L149.6 154H64z" fill="#3b4453"/>
<path d="M14 129L5.5 149.5M209 129L201.5 149.5" stroke="#4a5160" stroke-width="1.1"/>
<path d="M136.4 134.4L145.6 143.6M145.6 134.4L136.4 143.6" stroke="#b4b8c0" stroke-width="2"/>
<path d="M172.5 139H188M180.2 131.2V146.8" stroke="#f0f0f0" stroke-width="2.2"/></svg>
<div class="lbl" style="left:6.65px;top:50.80px;font-size:15px;line-height:18px;color:#efefef;letter-spacing:-0.458px;">Line</div>
<div class="lbl" style="left:47.65px;top:50.80px;font-size:15px;line-height:18px;color:#efefef;letter-spacing:-0.214px;">Polyline</div>
<div class="lbl" style="left:116.65px;top:51.60px;font-size:15px;line-height:18px;color:#efefef;letter-spacing:-0.275px;">Circle</div>
<div class="lbl" style="left:180.65px;top:51.60px;font-size:15px;line-height:18px;color:#efefef;letter-spacing:-0.250px;">Arc</div>
<div class="lbl" style="left:107.65px;top:101.10px;font-size:15px;line-height:18px;color:#efefef;letter-spacing:-0.333px;">Draw</div>
<div class="lbl" style="left:305.15px;top:8.80px;font-size:15px;line-height:18px;color:#efefef;letter-spacing:-0.108px;">Move</div>
<div class="lbl" style="left:306.15px;top:39.80px;font-size:15px;line-height:18px;color:#efefef;letter-spacing:-0.500px;">Copy</div>
<div class="lbl" style="left:306.15px;top:70.80px;font-size:15px;line-height:18px;color:#efefef;letter-spacing:-0.333px;">Stretch</div>
<div class="lbl" style="left:397.15px;top:8.80px;font-size:15px;line-height:18px;color:#efefef;letter-spacing:-0.150px;">Rotate</div>
<div class="lbl" style="left:396.15px;top:39.80px;font-size:15px;line-height:18px;color:#efefef;letter-spacing:0.275px;">Mirror</div>
<div class="lbl" style="left:396.15px;top:70.80px;font-size:15px;line-height:18px;color:#efefef;letter-spacing:-0.750px;">Scale</div>
<div class="lbl" style="left:484.65px;top:8.80px;font-size:15px;line-height:18px;color:#efefef;letter-spacing:-0.458px;">Trim</div>
<div class="lbl" style="left:485.15px;top:39.80px;font-size:15px;line-height:18px;color:#efefef;letter-spacing:-0.025px;">Fillet</div>
<div class="lbl" style="left:484.15px;top:70.80px;font-size:15px;line-height:18px;color:#efefef;letter-spacing:-0.344px;">Array</div>
<div class="lbl" style="left:397.15px;top:101.10px;font-size:15px;line-height:18px;color:#efefef;letter-spacing:0.475px;">Modify</div>
<div class="lbl" style="left:604.95px;top:51.80px;font-size:15px;line-height:18px;color:#efefef;letter-spacing:-0.567px;">Text</div>
<div class="lbl" style="left:647.15px;top:50.80px;font-size:15px;line-height:18px;color:#efefef;letter-spacing:-0.047px;">Dimension</div>
<div class="lbl" style="left:632.65px;top:101.10px;font-size:15px;line-height:18px;color:#efefef;letter-spacing:0.250px;">Annotation</div>
<div class="lbl" style="left:792.65px;top:50.80px;font-size:15px;line-height:18px;color:#efefef;letter-spacing:-0.625px;">Layer</div>
<div class="lbl" style="left:776.65px;top:70.80px;font-size:15px;line-height:18px;color:#efefef;letter-spacing:-0.153px;">Properties</div>
<div class="lbl" style="left:975.52px;top:8.40px;font-size:15px;line-height:18px;color:#efefef;letter-spacing:-0.229px;">janelas</div>
<div class="lbl" style="left:912.65px;top:101.10px;font-size:15px;line-height:18px;color:#efefef;letter-spacing:-0.800px;">Layers</div>
<div class="lbl" style="left:1121.15px;top:50.00px;font-size:15px;line-height:18px;color:#efefef;letter-spacing:-0.400px;">Insert</div>
<div class="lbl" style="left:1135.65px;top:101.10px;font-size:15px;line-height:18px;color:#efefef;letter-spacing:-0.438px;">Block</div>
<div class="lbl" style="left:1231.15px;top:50.80px;font-size:15px;line-height:18px;color:#efefef;letter-spacing:-0.094px;">Match</div>
<div class="lbl" style="left:1218.45px;top:70.80px;font-size:15px;line-height:18px;color:#efefef;letter-spacing:-0.242px;">Properties</div>
<div class="lbl" style="left:1349.35px;top:8.70px;font-size:15px;line-height:18px;color:#efefef;letter-spacing:-0.750px;">ByLayer</div>
<div class="lbl" style="left:1406.55px;top:39.50px;font-size:15px;line-height:18px;color:#efefef;letter-spacing:-0.800px;">ByLayer</div>
<div class="lbl" style="left:1406.55px;top:70.50px;font-size:15px;line-height:18px;color:#efefef;letter-spacing:-0.800px;">ByLayer</div>
<div class="lbl" style="left:1299.65px;top:101.10px;font-size:15px;line-height:18px;color:#efefef;letter-spacing:-0.153px;">Properties</div>
<div class="lbl" style="left:1494.95px;top:50.80px;font-size:15px;line-height:18px;color:#efefef;letter-spacing:-0.363px;">Group</div>
<div class="lbl" style="left:1499.65px;top:101.10px;font-size:15px;line-height:18px;color:#efefef;letter-spacing:-0.450px;">Groups</div>
<div class="lbl" style="left:1591.45px;top:51.60px;font-size:15px;line-height:18px;color:#efefef;letter-spacing:-0.529px;">Measure</div>
<div class="lbl" style="left:1600.65px;top:101.10px;font-size:15px;line-height:18px;color:#efefef;letter-spacing:0.203px;">Utilities</div>
<div class="lbl" style="left:23.65px;top:131.30px;font-size:15px;line-height:18px;color:#efefef;letter-spacing:-0.156px;">Start</div>
<div class="lbl" style="left:84.65px;top:131.30px;font-size:15px;line-height:18px;color:#ffffff;letter-spacing:-0.469px;font-weight:bold;">cone*</div>
<div class="hist" style="top:919px;width:149px;background:#6f6f6f;color:#dedede"><span style="position:relative;top:1.6px">Command: PREVIEW</span></div>
<div class="hist" style="top:944px;width:617px;background:#6f6f6f;color:#e0e0e0"><span style="position:relative;top:1.6px">Press ESC or ENTER to exit, or right-click to display shortcut menu.</span></div>
<div class="hist" style="top:969px;width:158px;background:#646464;color:#ffffff"><span style="position:relative;top:1.6px">Command: _.PSPACE</span></div>
<div class="abs" style="left:395px;top:993px;width:80px;height:34px;background:#474d58;border-radius:4px 0 0 0"></div>
<div class="abs" style="left:466px;top:993px;width:1000px;height:34px;background:#383e4a"></div>
<div class="abs" style="left:467px;top:993px;width:1000px;height:1px;background:#3f4756"></div>
<div class="abs" style="left:467px;top:994px;width:1000px;height:32px;background:#dcdcdc;border-radius:3px 0 0 3px;border-left:1px solid #e6e6e6;border-top:1px solid #e9e9e9;border-bottom:1px solid #e6e6e6"></div>
<div class="lbl" style="left:512px;top:1001.2px;font-family:'Liberation Mono',monospace;font-style:italic;font-size:15px;line-height:19px;color:#808080;letter-spacing:-0.1px">Type a command</div>
<svg class="abs" style="left:0;top:0" width="1693" height="1036" viewBox="0 0 1693 1036"><rect x="400.2" y="1000.0" width="1.5" height="1.5" fill="#dadada"/><rect x="404.2" y="1000.0" width="1.5" height="1.5" fill="#dadada"/><rect x="400.2" y="1002.5" width="1.5" height="1.5" fill="#dadada"/><rect x="404.2" y="1002.5" width="1.5" height="1.5" fill="#dadada"/><rect x="400.2" y="1005.1" width="1.5" height="1.5" fill="#dadada"/><rect x="404.2" y="1005.1" width="1.5" height="1.5" fill="#dadada"/><rect x="400.2" y="1007.6" width="1.5" height="1.5" fill="#dadada"/><rect x="404.2" y="1007.6" width="1.5" height="1.5" fill="#dadada"/><rect x="400.2" y="1010.2" width="1.5" height="1.5" fill="#dadada"/><rect x="404.2" y="1010.2" width="1.5" height="1.5" fill="#dadada"/><rect x="400.2" y="1012.8" width="1.5" height="1.5" fill="#dadada"/><rect x="404.2" y="1012.8" width="1.5" height="1.5" fill="#dadada"/><rect x="400.2" y="1015.3" width="1.5" height="1.5" fill="#dadada"/><rect x="404.2" y="1015.3" width="1.5" height="1.5" fill="#dadada"/><rect x="400.2" y="1017.9" width="1.5" height="1.5" fill="#dadada"/><rect x="404.2" y="1017.9" width="1.5" height="1.5" fill="#dadada"/><path d="M415 1003.2L425 1013.2M425 1003.2L415 1013.2" stroke="#e6e6e6" stroke-width="2"/><path d="M442.6 1016.4L452 1007" stroke="#d2d2d2" stroke-width="3" stroke-linecap="round"/><path d="M458.8 1002.2A5 5 0 1 0 459.6 1007.8L455.2 1007.4L453.4 1004.2z" fill="#d2d2d2"/><rect x="472.5" y="1002.5" width="19" height="14" fill="#cfcfcf" stroke="#8a8a8a" stroke-width="1"/><rect x="472" y="1002" width="20" height="3.6" fill="#8a8a8a"/><path d="M474.6 1008.6L477.4 1010.6L474.6 1012.6M478.6 1013.4H482" fill="none" stroke="#707070" stroke-width="0.9"/><path d="M494.6 1008.2h9.4l-4.7 4.8z" fill="#6a6a6a"/></svg>
<div class="abs" style="left:0;top:1027px;width:1693px;height:5px;background:#3b4453"></div>
<div class="abs" style="left:0;top:1032px;width:1693px;height:4px;background:#222933"></div>
<svg class="abs" style="left:0;top:1027px" width="1693" height="9" viewBox="0 0 1693 9"><path d="M89.5 5L88 9H136L137.5 5z" fill="#3b4453"/><rect x="1290" y="6.6" width="52" height="2.4" fill="#3b4453"/><rect x="1345" y="6.6" width="30" height="2.4" fill="#3b4453"/><rect x="1378" y="6.6" width="55" height="2.4" fill="#3b4453"/></svg>
<div class="abs" style="left:1433px;top:814px;width:300px;height:240px;background:linear-gradient(180deg,#e9e9e9 0%,#e8e8e9 60%,#e4e6ec 100%);border-radius:9px;border:1px solid #f0f0f0;box-shadow:0 3px 10px 1px rgba(0,0,0,0.28)"></div>
<div class="abs" style="left:1452px;top:996px;width:300px;height:39px;background:#f9f9f9;border-radius:5px;border:1px solid #e4e4e4"></div>
<div class="lbl" style="left:1481.95px;top:832.60px;font-size:15px;line-height:18px;color:#1c1c1c;letter-spacing:-0.086px;">Ferramenta de Recorte</div>
<div class="lbl" style="left:1452.45px;top:878.01px;font-size:17px;line-height:24px;color:#1a1a1a;letter-spacing:0.000px;letter-spacing:0.2px;">A captura de ecrã foi copiada para a área de</div>
<div class="lbl" style="left:1452.45px;top:901.61px;font-size:17px;line-height:24px;color:#1a1a1a;letter-spacing:0.000px;">transferência</div>
<div class="lbl" style="left:1452.45px;top:924.61px;font-size:17px;line-height:24px;color:#5d5d5d;letter-spacing:0.000px;letter-spacing:0.22px;">Guardado automaticamente na pasta de capturas de</div>
<div class="lbl" style="left:1452.45px;top:948.41px;font-size:17px;line-height:24px;color:#5d5d5d;letter-spacing:0.000px;">ecrã.</div>
<div class="lbl" style="left:1583.85px;top:1006.01px;font-size:17px;line-height:24px;color:#1a1a1a;letter-spacing:0.000px;">Marcação e partilha</div>
<svg class="abs" style="left:1450px;top:830px" width="26" height="26" viewBox="0 0 26 26"><rect x="5" y="5" width="8.6" height="8.6" fill="#dcdcdc" stroke="#c0c0c0" stroke-width="0.6"/><path d="M3 3.4H11M3.6 3V11" fill="none" stroke="#e8471c" stroke-width="2.3" stroke-dasharray="2.2 1"/><path d="M13.6 5V17M7 13.6H19" stroke="#8a8a8a" stroke-width="1.3"/><circle cx="12.4" cy="19.4" r="2" fill="none" stroke="#2a9cf0" stroke-width="1.4"/><circle cx="20" cy="12.6" r="2" fill="none" stroke="#2a9cf0" stroke-width="1.4"/></svg>
</div></body></html>
